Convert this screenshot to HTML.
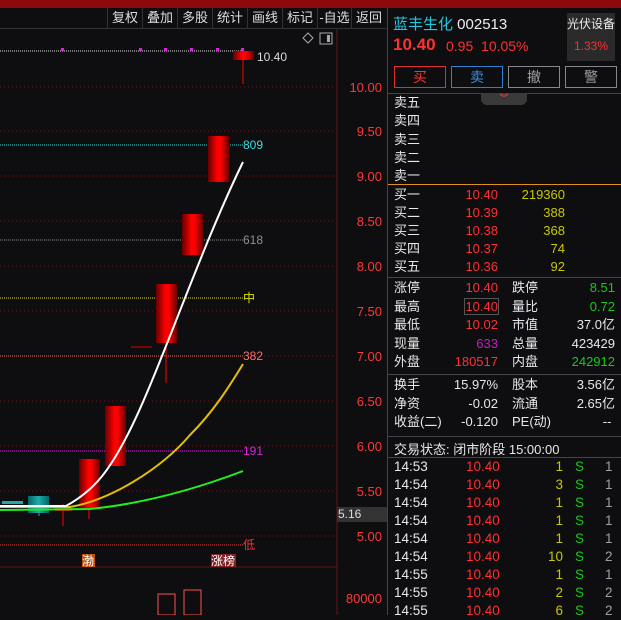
<!DOCTYPE html>
<html><head><meta charset="utf-8"><style>
*{margin:0;padding:0;box-sizing:border-box}
body{width:621px;height:615px;background:#0e0e11;overflow:hidden;position:relative;font-family:"Liberation Sans","Noto Sans CJK SC",sans-serif;font-size:13px;color:#e8e8e8}
.a{position:absolute;white-space:nowrap}
.r{color:#ff3030}.y{color:#c8c800}.g{color:#18c818}.w{color:#e8e8e8}.gr{color:#a0a0a0}
.tb{position:absolute;top:8px;height:20px;line-height:20px;font-size:13px;color:#ddd;text-align:center;border-left:1px solid #333}
.btn{position:absolute;top:66px;height:22px;width:52px;text-align:center;line-height:20px;font-size:14px}
</style></head><body>
<div class="a" style="left:0;top:0;width:621px;height:8px;background:#8e0a0a"></div>
<div class="a" style="left:0;top:28px;width:387px;height:1px;background:#333"></div>
<div class="tb" style="left:107px;width:35px">复权</div>
<div class="tb" style="left:142px;width:35px">叠加</div>
<div class="tb" style="left:177px;width:35px">多股</div>
<div class="tb" style="left:212px;width:35px">统计</div>
<div class="tb" style="left:247px;width:35px">画线</div>
<div class="tb" style="left:282px;width:35px">标记</div>
<div class="tb" style="left:317px;width:34px">-自选</div>
<div class="tb" style="left:351px;width:35px">返回</div>
<svg class="a" style="left:0;top:0" width="388" height="615" font-family="Liberation Sans,Noto Sans CJK SC,sans-serif">
<g stroke="#6a1010" stroke-dasharray="1,3" stroke-width="1">
<line x1="0" y1="87" x2="335" y2="87"/><line x1="0" y1="131" x2="335" y2="131"/><line x1="0" y1="176" x2="335" y2="176"/><line x1="0" y1="221" x2="335" y2="221"/><line x1="0" y1="266" x2="335" y2="266"/><line x1="0" y1="311" x2="335" y2="311"/><line x1="0" y1="356" x2="335" y2="356"/><line x1="0" y1="401" x2="335" y2="401"/><line x1="0" y1="446" x2="335" y2="446"/><line x1="0" y1="491" x2="335" y2="491"/><line x1="0" y1="536" x2="335" y2="536"/></g>
<line x1="337" y1="29" x2="337" y2="615" stroke="#6a1010"/>
<line x1="0" y1="567" x2="337" y2="567" stroke="#6a1010"/>
<line x1="0" y1="51" x2="243" y2="51" stroke="#ddd" stroke-dasharray="1,1"/>
<g fill="#e020e0"><rect x="61" y="48" width="3" height="3"/><rect x="139" y="48" width="3" height="3"/><rect x="164" y="48" width="3" height="3"/><rect x="190" y="48" width="3" height="3"/><rect x="216" y="48" width="3" height="3"/><rect x="241" y="48" width="3" height="3"/></g>
<line x1="0" y1="145" x2="243" y2="145" stroke="#30e0e0" stroke-dasharray="1,1"/>
<line x1="0" y1="240" x2="243" y2="240" stroke="#909090" stroke-dasharray="1,1"/>
<line x1="0" y1="298" x2="243" y2="298" stroke="#e0e000" stroke-dasharray="1,1"/>
<line x1="0" y1="356" x2="243" y2="356" stroke="#ff6060" stroke-dasharray="1,1"/>
<line x1="0" y1="451" x2="243" y2="451" stroke="#e020e0" stroke-dasharray="1,1"/>
<line x1="0" y1="545" x2="243" y2="545" stroke="#ff3030" stroke-dasharray="1,1"/>
<defs><linearGradient id="rg" x1="0" x2="1"><stop offset="0" stop-color="#600"/><stop offset=".45" stop-color="#f00"/><stop offset=".6" stop-color="#f00"/><stop offset="1" stop-color="#600"/></linearGradient>
<linearGradient id="tg" x1="0" x2="1"><stop offset="0" stop-color="#066"/><stop offset=".5" stop-color="#2aa"/><stop offset="1" stop-color="#066"/></linearGradient></defs>
<g fill="url(#rg)"><rect x="208" y="136" width="21" height="46"/><rect x="182" y="214" width="21" height="41"/><rect x="156" y="284" width="21" height="59"/><rect x="105" y="406" width="21" height="60"/><rect x="79" y="459" width="21" height="49"/><rect x="233" y="51" width="21" height="9"/></g>
<line x1="166" y1="343" x2="166" y2="383" stroke="#f00"/><line x1="243" y1="60" x2="243" y2="84" stroke="#f00"/><line x1="89" y1="508" x2="89" y2="519" stroke="#f00"/><line x1="63" y1="504" x2="63" y2="526" stroke="#f00"/>
<line x1="131" y1="347" x2="152" y2="347" stroke="#d00"/>
<rect x="28" y="496" width="21" height="17" fill="url(#tg)"/><rect x="2" y="501" width="21" height="3" fill="#2aa"/><line x1="39" y1="513" x2="39" y2="516" stroke="#2aa"/>
<rect x="55" y="508" width="17" height="3" fill="#c00"/>
<path d="M0,510 L90,509 C130,505 180,495 243,471" stroke="#20f020" stroke-width="2" fill="none"/>
<path d="M0,507 L70,507 C110,500 160,470 190,435 C215,410 230,385 243,364" stroke="#e0c000" stroke-width="2" fill="none"/>
<path d="M0,506 L66,506 C95,490 110,470 130,430 C160,370 200,250 243,162" stroke="#fff" stroke-width="2" fill="none"/>
<g font-size="12"><text x="243" y="149" fill="#30e0e0">809</text><text x="243" y="244" fill="#909090">618</text><text x="243" y="302" fill="#e0e000">中</text><text x="243" y="360" fill="#ff7070">382</text><text x="243" y="455" fill="#e020e0">191</text><text x="243" y="549" fill="#ff3030">低</text><text x="257" y="61" fill="#ddd">10.40</text></g>
<rect x="82" y="554" width="13" height="13" fill="#c05010"/><text x="82" y="565" font-size="12" fill="#fff">渤</text>
<rect x="211" y="554" width="25" height="13" fill="#802020"/><text x="211" y="565" font-size="12" fill="#fff">涨榜</text>
<rect x="158" y="594" width="17" height="21" fill="none" stroke="#ff5050"/><rect x="184" y="590" width="17" height="25" fill="none" stroke="#ff5050"/>
<g font-size="13" fill="#ff3838" text-anchor="end"><text x="382" y="92">10.00</text><text x="382" y="136">9.50</text><text x="382" y="181">9.00</text><text x="382" y="226">8.50</text><text x="382" y="271">8.00</text><text x="382" y="316">7.50</text><text x="382" y="361">7.00</text><text x="382" y="406">6.50</text><text x="382" y="451">6.00</text><text x="382" y="496">5.50</text><text x="382" y="541">5.00</text><text x="382" y="603">80000</text></g>
<rect x="337" y="507" width="50" height="15" fill="#333"/><text x="338" y="518" font-size="12" fill="#ddd">5.16</text>
<path d="M308,33 l5,5 l-5,5 l-5,-5z" stroke="#aaa" fill="none"/><rect x="320" y="33" width="12" height="11" stroke="#aaa" fill="none"/><rect x="327" y="35" width="3" height="7" fill="#aaa"/>
</svg>
<div class="a" style="left:387px;top:8px;width:1px;height:607px;background:#444"></div>
<div class="a" style="left:393px;top:13px;font-size:15px;color:#20c8e0">蓝丰生化 <span style="color:#eee">002513</span></div>
<div class="a" style="left:567px;top:13px;width:48px;height:48px;background:#2a2a2a;text-align:center;font-size:12px;color:#eee;line-height:22px">光伏设备<br><span class="r">1.33%</span></div>
<div class="a r" style="left:393px;top:35px;font-size:17px;font-weight:bold">10.40</div>
<div class="a r" style="left:446px;top:38px;font-size:14px">0.95&nbsp; 10.05%</div>
<div class="btn r" style="left:394px;border:1px solid #e03030">买</div>
<div class="btn" style="left:451px;border:1px solid #3080d0;color:#3a90e0">卖</div>
<div class="btn gr" style="left:508px;border:1px solid #888">撤</div>
<div class="btn gr" style="left:565px;border:1px solid #888">警</div>
<div class="a" style="left:388px;top:93px;width:233px;height:1px;background:#444"></div>
<div class="a" style="left:481px;top:93px;width:46px;height:12px;background:#3a3a3a;border-radius:0 0 6px 6px;color:#f44;font-size:9px;text-align:center;line-height:10px">︾</div>
<div class="a" style="left:394px;top:94px;line-height:18.3px">卖五<br>卖四<br>卖三<br>卖二<br>卖一</div>
<div class="a" style="left:388px;top:184px;width:233px;height:1px;background:#e09020"></div>
<div class="a" style="left:394px;top:186px;line-height:18px">买一<br>买二<br>买三<br>买四<br>买五</div>
<div class="a r" style="left:440px;top:186px;width:58px;text-align:right;line-height:18px">10.40<br>10.39<br>10.38<br>10.37<br>10.36</div>
<div class="a y" style="left:500px;top:186px;width:65px;text-align:right;line-height:18px">219360<br>388<br>368<br>74<br>92</div>
<div class="a" style="left:388px;top:277px;width:233px;height:1px;background:#444"></div>
<div class="a" style="left:394px;top:279px;line-height:18.5px">涨停<br>最高<br>最低<br>现量<br>外盘</div>
<div class="a" style="left:440px;top:279px;width:58px;text-align:right;line-height:18.5px"><span class="r">10.40</span><br><span class="r" style="outline:1px solid #555">10.40</span><br><span class="r">10.02</span><br><span style="color:#c020c0">633</span><br><span class="r">180517</span></div>
<div class="a" style="left:512px;top:279px;line-height:18.5px">跌停<br>量比<br>市值<br>总量<br>内盘</div>
<div class="a" style="left:555px;top:279px;width:60px;text-align:right;line-height:18.5px"><span class="g">8.51</span><br><span class="g">0.72</span><br>37.0亿<br>423429<br><span class="g">242912</span></div>
<div class="a" style="left:388px;top:374px;width:233px;height:1px;background:#444"></div>
<div class="a" style="left:394px;top:376px;line-height:18.5px">换手<br>净资<br>收益(二)</div>
<div class="a" style="left:440px;top:376px;width:58px;text-align:right;line-height:18.5px">15.97%<br>-0.02<br>-0.120</div>
<div class="a" style="left:512px;top:376px;line-height:18.5px">股本<br>流通<br>PE(动)</div>
<div class="a" style="left:555px;top:376px;width:60px;text-align:right;line-height:18.5px">3.56亿<br>2.65亿<br>--&nbsp;</div>
<div class="a" style="left:388px;top:436px;width:233px;height:1px;background:#444"></div>
<div class="a" style="left:394px;top:439px">交易状态: 闭市阶段 15:00:00</div>
<div class="a" style="left:388px;top:457px;width:233px;height:1px;background:#444"></div>
<div class="a" style="left:394px;top:458px;line-height:18px;font-size:13.5px">14:53<br>14:54<br>14:54<br>14:54<br>14:54<br>14:54<br>14:55<br>14:55<br>14:55</div>
<div class="a r" style="left:466px;top:458px;line-height:18px;font-size:13.5px">10.40<br>10.40<br>10.40<br>10.40<br>10.40<br>10.40<br>10.40<br>10.40<br>10.40</div>
<div class="a y" style="left:530px;top:458px;width:33px;text-align:right;line-height:18px;font-size:13.5px">1<br>3<br>1<br>1<br>1<br>10<br>1<br>2<br>6</div>
<div class="a g" style="left:575px;top:458px;line-height:18px;font-size:13.5px">S<br>S<br>S<br>S<br>S<br>S<br>S<br>S<br>S</div>
<div class="a gr" style="left:605px;top:458px;line-height:18px;font-size:13.5px">1<br>1<br>1<br>1<br>1<br>2<br>1<br>2<br>2</div>
</body></html>
